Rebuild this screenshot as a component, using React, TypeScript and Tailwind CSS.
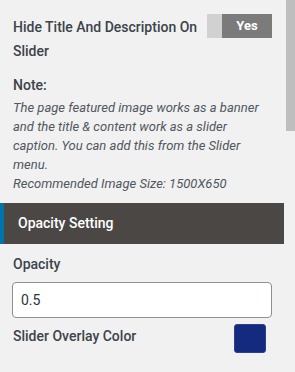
import React from 'react';

const App: React.FC = () => {
  return (
    <div
      className="flex h-[372px] w-[295px] overflow-hidden bg-[#f1f1f1] text-[#3c434a]"
      style={{ fontFamily: 'Roboto, "Liberation Sans", sans-serif' }}
    >
      <div className="flex-1 pr-[2px]">
        {/* toggle row */}
        <div className="flex items-start justify-between pl-[13px] pr-[12px] pt-[15px]">
          <div className="w-[190px] text-[14px] font-medium leading-[24px]">
            Hide Title And Description On Slider
          </div>
          <div className="mt-[-1px] flex h-[24px] w-[65px]">
            <div className="w-[15px] bg-[#d1d1d1]" />
            <div className="flex flex-1 items-center justify-center bg-[#7b7b7b] text-[13px] font-bold text-white">
              Yes
            </div>
          </div>
        </div>

        {/* note */}
        <div className="mt-[10px] pl-[13px] pr-[10px]">
          <div className="text-[14px] font-medium leading-[24px]">Note:</div>
          <p className="mt-[1px] text-[13px] italic leading-[19px] text-[#50575e]">
            The page featured image works as a banner and the title &amp; content work as a slider
            caption. You can add this from the Slider menu.
            <br />
            Recommended Image Size: 1500X650
          </p>
        </div>

        {/* section header */}
        <div className="mt-[10px] flex h-[41px] items-center border-l-4 border-[#0073aa] bg-[#4b4745] pl-[14px] text-[14px] font-medium text-white">
          Opacity Setting
        </div>

        {/* opacity */}
        <div className="mt-[8px] pl-[12px] pr-[12px]">
          <div className="pl-[1px] text-[14px] font-medium leading-[24px]">Opacity</div>
          <div className="mt-[6px] flex h-[36px] items-center rounded-[4px] border border-[#8c8f94] bg-white pl-[8px] text-[14px] text-[#2c3338]">
            0.5
          </div>
          <div className="mt-[6px] flex items-start justify-between pl-[1px] pr-[6px]">
            <div className="text-[14px] font-medium leading-[24px]">Slider Overlay Color</div>
            <div className="h-[29px] w-[32px] rounded-[3px] border border-[#2a3f8f] bg-[#142a7f]" />
          </div>
        </div>
      </div>

      {/* scrollbar */}
      <div className="w-[9px]">
        <div className="h-[131px] bg-[#bebebe]" />
      </div>
    </div>
  );
};

export default App;
